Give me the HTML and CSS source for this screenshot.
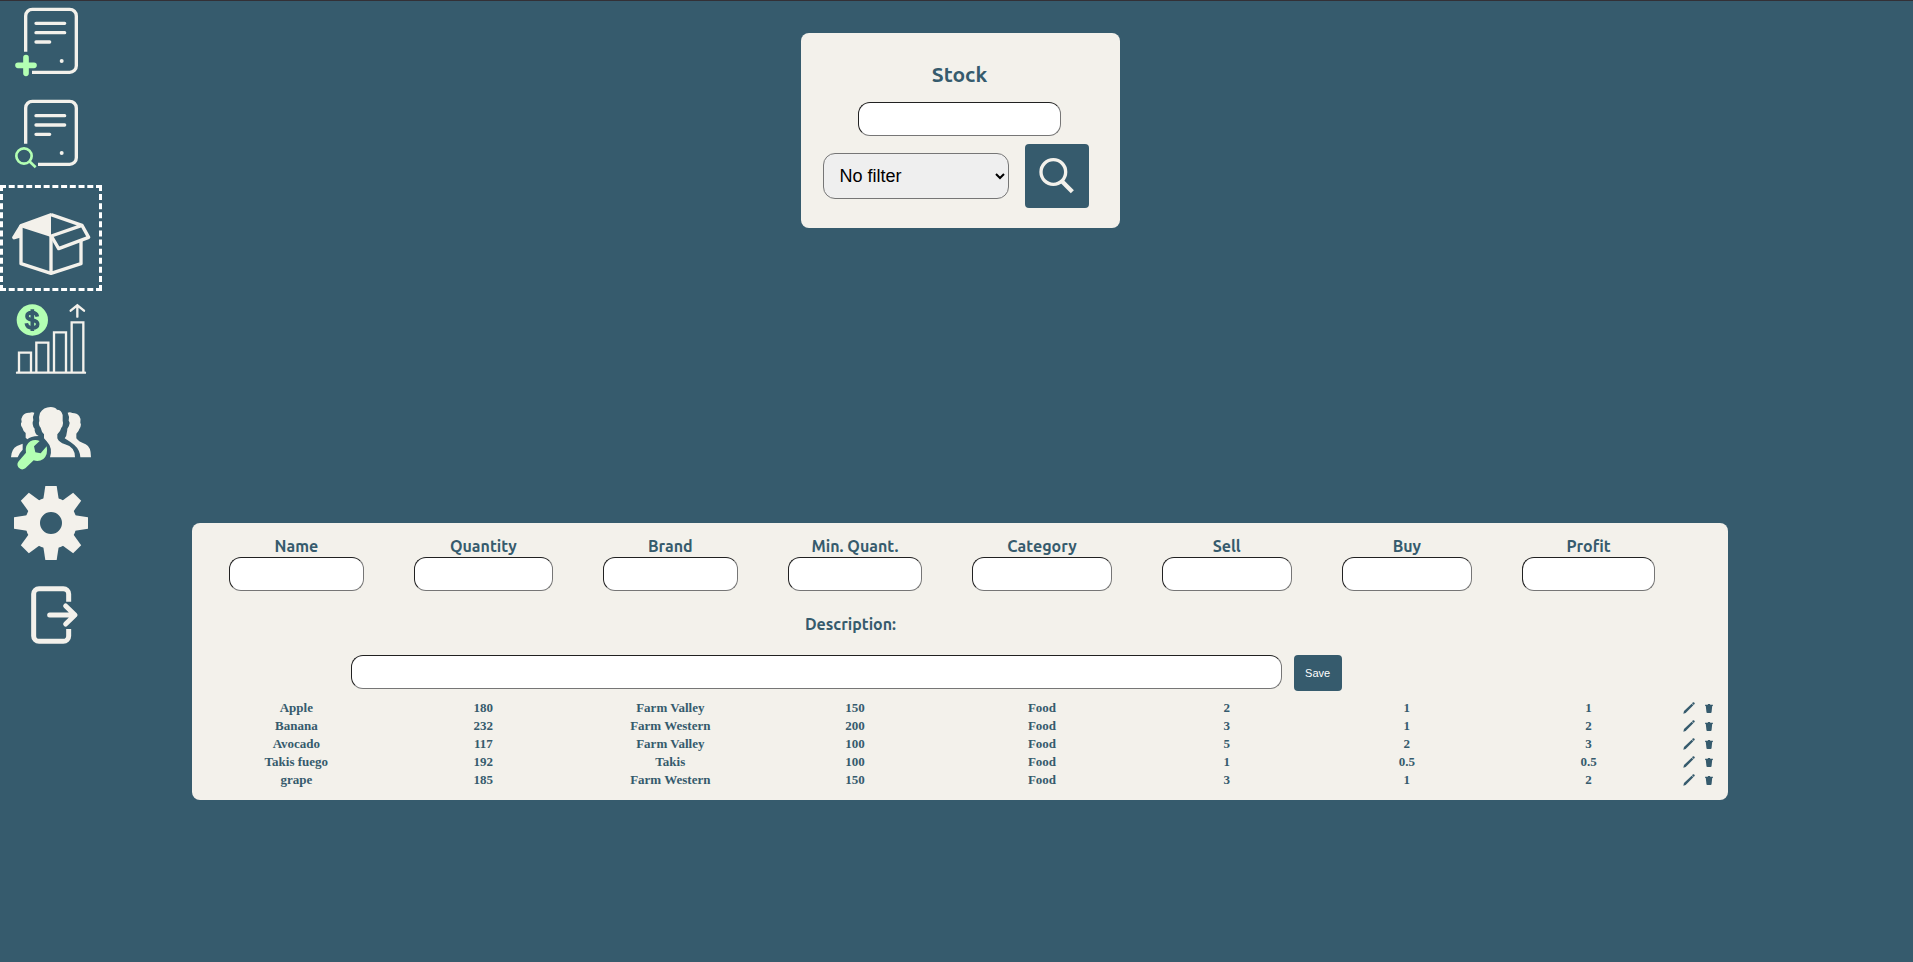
FILE: index.html
```html
<!DOCTYPE html>
<html lang="en">
<head>
<meta charset="utf-8">
<title>Stock</title>
<link rel="stylesheet" href="styles.css">
</head>
<body>
<svg class="defs" aria-hidden="true">
  <symbol id="pencil" viewBox="0 0 36 36">
    <path d="M1 35L3 27L26 5L31 10L8 33Z M27 4L30 1Q33 0 35 3Q36 5 34 7L32 9Z"/>
  </symbol>
  <symbol id="trash" viewBox="0 0 24 28">
    <path d="M0 2H8L9 0H15L16 2H24V6H22L20 25Q20 28 17 28H7Q4 28 4 25L2 6H0Z"/>
  </symbol>
</svg>
<nav class="sidebar" aria-label="Main">
  <a href="#new" class="nav-item" aria-label="New order">
    <svg class="nav-icon" viewBox="0 3 306 273">
      <g class="line w10"><path d="M77 155V48a20 20 0 0 1 20-20H209a20 20 0 0 1 20 20V197a20 20 0 0 1-20 20H96"/>
      <path class="round" d="M108 70H194M108 98H194M108 126H149"/></g>
      <circle class="solid" cx="185" cy="183" r="6"/>
      <path class="accent-line w17 round" d="M78 173V220M54 196H102"/>
    </svg>
  </a>
  <a href="#find" class="nav-item" aria-label="Find order">
    <svg class="nav-icon" viewBox="0 276 306 279">
      <g class="line w10"><path d="M77 431V324a20 20 0 0 1 20-20H209a20 20 0 0 1 20 20V473a20 20 0 0 1-20 20H114"/>
      <path class="round" d="M108 347H194M108 375H194M108 403H149"/></g>
      <circle class="solid" cx="185" cy="459" r="6"/>
      <g class="accent-line w8"><circle cx="72" cy="468" r="23"/><path d="M88 484L107 502"/></g>
    </svg>
  </a>
  <a href="#stock" class="nav-item current" aria-label="Stock" aria-current="page">
    <svg class="nav-icon" viewBox="9 39 288 300">
      <path class="solid" d="M153 114L60 148L36 187Q37 195 44 193L60 188V156L153 186Z"/>
      <g class="line w10 join"><path d="M153 119L246 151L266 187L176 221L154 183L246 151"/>
      <path d="M63 151V266L153 295L243 266V194M153 183V295"/></g>
    </svg>
  </a>
  <a href="#sales" class="nav-item" aria-label="Sales">
    <svg class="nav-icon" viewBox="0 348 306 312">
      <circle class="accent" cx="97" cy="435" r="47"/>
      <path class="dollar" d="M97 403V468M112 425Q110 413 96 413Q81 413 81 424Q81 432 96 435Q113 438 113 447Q113 459 97 459Q81 459 79 445"/>
      <g class="line w7"><path d="M57 593V533H93V593M109 593V503H145V593M162 593V472H198V593M215 593V442H250V593"/>
      <path class="round" d="M51 593H255M232 393V425M212 407L232 391L252 407"/></g>
    </svg>
  </a>
  <a href="#users" class="nav-item" aria-label="Users">
    <svg class="nav-icon" viewBox="0 30 306 258">
      <g class="solid">
        <path d="M103 83Q96 80 89 83Q75 82 68 92Q62 100 65 111Q62 114 63 121Q65 126 67 128Q69 137 77 144V158L82 163Q91 154 116 153Q107 149 106 143Q103 136 104 131Q99 126 98 117Q97 111 100 106Q97 94 103 83Z"/>
        <path d="M33 217Q34 192 51 183L68 176V194Q59 202 53 217Z"/>
        <path d="M203 83Q210 80 217 84Q231 84 238 94Q244 102 241 113Q244 117 242 124Q240 130 238 132Q236 140 229 146V160Q235 170 257 178Q273 185 273 217H241Q240 195 223 180Q212 171 194 160Q200 154 200 145Q202 137 202 131Q208 124 209 114Q208 110 206 107Q209 94 203 83Z"/>
        <path d="M120 84Q130 66 152 66Q166 66 171 74Q184 74 188 90V107Q190 112 188 121Q187 126 184 128Q181 140 172 148V160Q177 172 195 178Q225 186 225 217H150Q159 189 140 169L132 160V148Q125 142 122 128Q118 126 117 118Q116 112 118 108Q116 94 120 84Z"/>
      </g>
      <path class="accent" d="M119 168Q105 162 91 169Q74 180 78 203L56 229Q49 237 55 247Q64 258 76 250L101 226Q117 231 130 222Q145 209 140 184L122 205L106 202L102 184Z"/>
    </svg>
  </a>
  <a href="#settings" class="nav-item" aria-label="Settings">
    <svg class="nav-icon" viewBox="0 288 306 276">
      <g class="solid">
        <path id="teeth" d="M136 303H170L176 342L130 342Z"/>
        <use href="#teeth" transform="rotate(45 153 414)"/><use href="#teeth" transform="rotate(90 153 414)"/>
        <use href="#teeth" transform="rotate(135 153 414)"/><use href="#teeth" transform="rotate(180 153 414)"/>
        <use href="#teeth" transform="rotate(225 153 414)"/><use href="#teeth" transform="rotate(270 153 414)"/>
        <use href="#teeth" transform="rotate(315 153 414)"/>
      </g>
      <circle class="line w44" cx="153" cy="414" r="55"/>
    </svg>
  </a>
  <a href="#logout" class="nav-item" aria-label="Log out">
    <svg class="nav-icon" viewBox="0 564 306 261">
      <g class="line w15"><path d="M206 650V627a16 16 0 0 0-16-16H117a16 16 0 0 0-16 16V753a16 16 0 0 0 16 16H190a16 16 0 0 0 16-16V732"/>
      <path class="round join" d="M149 690H224M197 663L225 690L197 717"/></g>
    </svg>
  </a>
</nav>
<main class="content">
  <form class="search-card">
    <h1 class="search-title"><label for="query">Stock</label></h1>
    <input class="field search-field" id="query" type="text">
    <div class="search-row">
      <select class="filter" aria-label="Filter">
        <option>No filter</option><option>Name</option><option>Brand</option><option>Category</option>
      </select>
      <button class="search-button" type="button" aria-label="Search">
        <svg class="search-icon" viewBox="0 0 108 108"><g class="line w10"><circle cx="43" cy="42" r="37"/><path class="w13" d="M68 69L100 101"/></g></svg>
      </button>
    </div>
  </form>
  <form class="stock-panel">
    <table class="stock-table">
      <colgroup>
        <col class="c-name"><col class="c-quantity"><col class="c-brand"><col class="c-min"><col class="c-category"><col class="c-sell"><col class="c-buy"><col class="c-profit"><col>
      </colgroup>
      <thead>
        <tr>
          <th><label for="name">Name</label><input class="field" id="name" type="text"></th>
          <th><label for="quantity">Quantity</label><input class="field" id="quantity" type="text"></th>
          <th><label for="brand">Brand</label><input class="field" id="brand" type="text"></th>
          <th><label for="min">Min. Quant.</label><input class="field" id="min" type="text"></th>
          <th><label for="category">Category</label><input class="field" id="category" type="text"></th>
          <th><label for="sell">Sell</label><input class="field" id="sell" type="text"></th>
          <th><label for="buy">Buy</label><input class="field" id="buy" type="text"></th>
          <th><label for="profit">Profit</label><input class="field" id="profit" type="text"></th>
          <td></td>
        </tr>
        <tr>
          <td class="description" colspan="7">
            <label for="description">Description:</label>
            <div class="description-row">
              <input class="field description-field" id="description" type="text">
              <button class="save" type="button">Save</button>
            </div>
          </td>
          <td colspan="2"></td>
        </tr>
      </thead>
      <tbody>
        <tr><td>Apple</td><td>180</td><td>Farm Valley</td><td>150</td><td>Food</td><td>2</td><td>1</td><td>1</td>
          <td><div class="action-row"><button type="button" aria-label="Edit Apple"><svg class="edit-icon"><use href="#pencil"/></svg></button><button type="button" aria-label="Delete Apple"><svg class="delete-icon"><use href="#trash"/></svg></button></div></td></tr>
        <tr><td>Banana</td><td>232</td><td>Farm Western</td><td>200</td><td>Food</td><td>3</td><td>1</td><td>2</td>
          <td><div class="action-row"><button type="button" aria-label="Edit Banana"><svg class="edit-icon"><use href="#pencil"/></svg></button><button type="button" aria-label="Delete Banana"><svg class="delete-icon"><use href="#trash"/></svg></button></div></td></tr>
        <tr><td>Avocado</td><td>117</td><td>Farm Valley</td><td>100</td><td>Food</td><td>5</td><td>2</td><td>3</td>
          <td><div class="action-row"><button type="button" aria-label="Edit Avocado"><svg class="edit-icon"><use href="#pencil"/></svg></button><button type="button" aria-label="Delete Avocado"><svg class="delete-icon"><use href="#trash"/></svg></button></div></td></tr>
        <tr><td>Takis fuego</td><td>192</td><td>Takis</td><td>100</td><td>Food</td><td>1</td><td>0.5</td><td>0.5</td>
          <td><div class="action-row"><button type="button" aria-label="Edit Takis fuego"><svg class="edit-icon"><use href="#pencil"/></svg></button><button type="button" aria-label="Delete Takis fuego"><svg class="delete-icon"><use href="#trash"/></svg></button></div></td></tr>
        <tr><td>grape</td><td>185</td><td>Farm Western</td><td>150</td><td>Food</td><td>3</td><td>1</td><td>2</td>
          <td><div class="action-row"><button type="button" aria-label="Edit grape"><svg class="edit-icon"><use href="#pencil"/></svg></button><button type="button" aria-label="Delete grape"><svg class="delete-icon"><use href="#trash"/></svg></button></div></td></tr>
      </tbody>
    </table>
  </form>
</main>
</body>
</html>
```
FILE: styles.css
```css
:root {
  --blue: #365b6d;
  --cream: #f3f1eb;
  --green: #b3ffb3;
  --heading: Ubuntu, "Noto Sans", sans-serif;
}

* { box-sizing: border-box; }

body {
  display: flex;
  align-items: flex-start;
  min-height: 100vh;
  margin: 0;
  border-top: 1px solid #333036;
  background: var(--blue);
  color: var(--blue);
}

.defs { position: absolute; width: 0; height: 0; }

/* Sidebar */
.sidebar { display: flex; flex: none; flex-direction: column; width: 102px; }
.nav-item { display: block; }
.nav-item.current { border: 3px dashed #fff; }
.nav-icon { display: block; width: 100%; }

.solid { fill: var(--cream); }
.accent { fill: var(--green); }
.line { fill: none; stroke: var(--cream); }
.accent-line { fill: none; stroke: var(--green); }
.dollar { fill: none; stroke: var(--blue); stroke-width: 11; }
.round { stroke-linecap: round; }
.join { stroke-linejoin: round; }
.w7 { stroke-width: 7; }
.w8 { stroke-width: 8; }
.w10 { stroke-width: 10; }
.w13 { stroke-width: 13; }
.w15 { stroke-width: 15; }
.w17 { stroke-width: 17; }
.w44 { stroke-width: 44; }

.content {
  display: flex;
  flex: 1;
  flex-direction: column;
  align-items: center;
  gap: 295px;
  padding: 32px 185px 32px 90px;
}

.field {
  display: block;
  width: 100%;
  height: 34px;
  padding: 4px 12px;
  border: 1px inset #767676;
  border-radius: 12px;
  background: #fff;
  font: 16px "Liberation Sans", sans-serif;
}

/* Search card */
.search-card {
  display: flex;
  flex-direction: column;
  align-items: center;
  width: 319px;
  padding: 26px 31px 20px 22px;
  border-radius: 8px;
  background: var(--cream);
}
.search-title { margin: 0 0 13px 8px; font: bold 21px/30px var(--heading); }
.search-field { width: 203px; margin: 0 0 8px 8px; }
.search-row { display: flex; align-items: center; gap: 16px; width: 100%; }
.filter {
  flex: 1;
  height: 46px;
  padding-left: 12px;
  border: 1px solid #767676;
  border-radius: 12px;
  background: #efefef;
  color: #000;
  font: 18px "Liberation Sans", sans-serif;
}
.search-button {
  display: grid;
  place-items: center;
  width: 64px;
  height: 64px;
  padding: 0;
  border: 0;
  border-radius: 4px;
  background: var(--blue);
}
.search-icon { width: 36px; height: 36px; }

/* Stock panel */
.stock-panel {
  width: 100%;
  padding: 12px 10px 11px 12px;
  border-radius: 8px;
  background: var(--cream);
}
.stock-table {
  width: 100%;
  table-layout: fixed;
  border-collapse: collapse;
  font: bold 13px/18px "Liberation Serif", serif;
  text-align: center;
}
.c-name, .c-min { width: 12.2%; }
.c-quantity, .c-category { width: 12.5%; }
.c-brand { width: 12.2%; }
.c-sell, .c-buy { width: 11.9%; }
.c-profit { width: 12.1%; }

.stock-table td { height: 18px; padding: 0; }
.stock-table th { padding: 0 25px; }
.stock-table label { display: block; font: bold 16px/22px var(--heading); }
.stock-table .description { padding: 22px 0 8px; }
.description-row { display: flex; justify-content: center; gap: 12px; padding: 20px 8px 0 0; }
.description-field { width: 72.4%; }
.save {
  width: 48px;
  height: 36px;
  padding: 0;
  border: 0;
  border-radius: 4px;
  background: var(--blue);
  color: #fff;
  font: 11px "Liberation Sans", sans-serif;
}

.action-row { display: flex; align-items: center; gap: 10px; height: 18px; padding-left: 3px; }
.action-row button { display: flex; padding: 0; border: 0; background: none; }
.action-row svg { fill: var(--blue); }
.edit-icon { width: 12px; height: 12px; }
.delete-icon { width: 8px; height: 9px; }
```
